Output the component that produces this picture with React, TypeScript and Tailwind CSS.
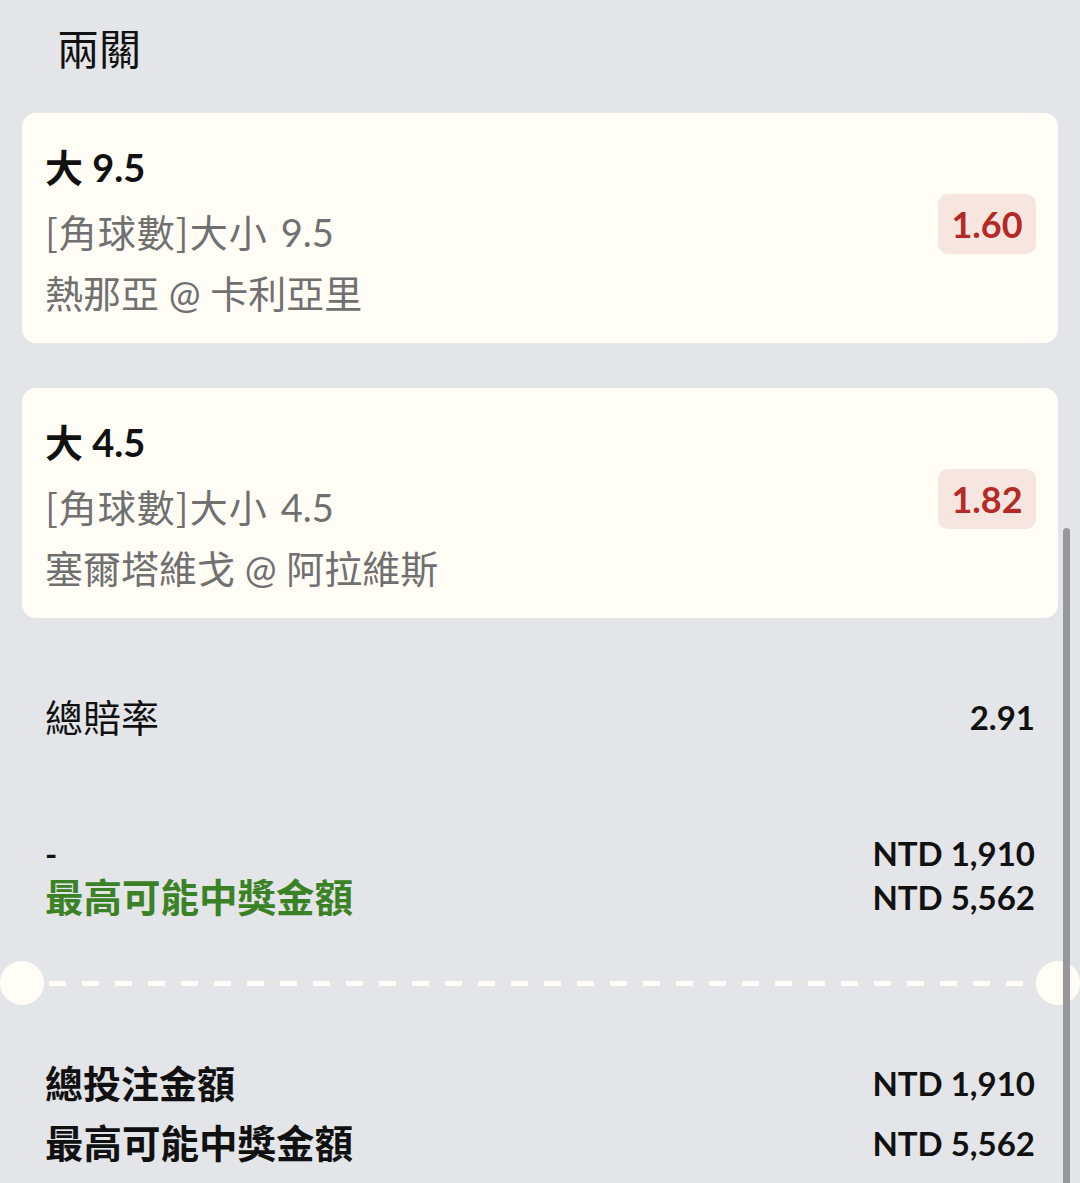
import React from 'react';

const legs = [
  { pick: '大 9.5', market: '[角球數]大小', line: '9.5', match: '熱那亞 @ 卡利亞里', odds: '1.60' },
  { pick: '大 4.5', market: '[角球數]大小', line: '4.5', match: '塞爾塔維戈 @ 阿拉維斯', odds: '1.82' },
];

const App: React.FC = () => {
  return (
    <div className="relative h-[1183px] overflow-hidden bg-[#e4e5e9] font-[Lato,'Noto_Sans_CJK_TC',sans-serif] text-[#111]">
      {/* header */}
      <div className="pl-[57px] pt-[22px] mb-[37px] text-[42px] leading-[54px]">兩關</div>

      {/* bet legs */}
      <div className="flex flex-col gap-[45px] px-[22px]">
        {legs.map((leg) => (
          <div
            key={leg.pick}
            className="flex items-center justify-between rounded-[14px] bg-[#fffdf5] pl-[23px] pr-[22px] pt-[23px] pb-[18px]"
          >
            <div className="text-[38px] leading-[63px]">
              <div className="h-[63px] font-bold">{leg.pick}</div>
              <div className="h-[63px] text-[#707070]">
                <span className="font-['Noto_Sans_CJK_TC',sans-serif] tracking-[1px]">{leg.market}</span>
                <span className="ml-[13px]">{leg.line}</span>
              </div>
              <div className="h-[63px] text-[#707070]">{leg.match}</div>
            </div>
            <div className="mb-[14px] flex h-[60px] w-[98px] items-center justify-center rounded-[10px] bg-[#f7e6df] text-[36px] font-bold text-[#b42a26]">
              {leg.odds}
            </div>
          </div>
        ))}
      </div>

      {/* total odds */}
      <div className="mt-[74px] flex h-[50px] items-center justify-between px-[45px] leading-[50px]">
        <span className="text-[38px]">總賠率</span>
        <span className="text-[33px] font-bold">2.91</span>
      </div>

      {/* stake / potential win */}
      <div className="mt-[89px] flex justify-between px-[45px] leading-[44px]">
        <div className="flex flex-col">
          <span className="h-[44px] text-[33px] font-bold">-</span>
          <span className="h-[44px] text-[38.5px] font-bold text-[#3b8227]">最高可能中獎金額</span>
        </div>
        <div className="flex flex-col items-end text-[33px] font-bold">
          <span className="h-[44px]">NTD 1,910</span>
          <span className="h-[44px]">NTD 5,562</span>
        </div>
      </div>

      {/* ticket divider */}
      <div className="mt-[42px] flex h-[44px] items-center">
        <div className="h-[44px] w-[44px] shrink-0 rounded-full bg-[#fffdf5]" />
        <div className="mx-[5px] h-[5px] flex-1 bg-[repeating-linear-gradient(90deg,#fffdf5_0_17px,transparent_17px_33px)]" />
        <div className="h-[44px] w-[44px] shrink-0 rounded-full bg-[#fffdf5]" />
      </div>

      {/* totals */}
      <div className="mt-[48px] flex flex-col px-[45px] leading-[60px] font-bold">
        <div className="flex h-[60px] items-center justify-between">
          <span className="text-[38px]">總投注金額</span>
          <span className="text-[33px]">NTD 1,910</span>
        </div>
        <div className="flex h-[60px] items-center justify-between">
          <span className="text-[38.5px]">最高可能中獎金額</span>
          <span className="text-[33px]">NTD 5,562</span>
        </div>
      </div>

      {/* scrollbar */}
      <div className="absolute right-[10px] top-[528px] bottom-0 w-[7px] rounded-t-full bg-[#98989c]" />
    </div>
  );
};

export default App;
